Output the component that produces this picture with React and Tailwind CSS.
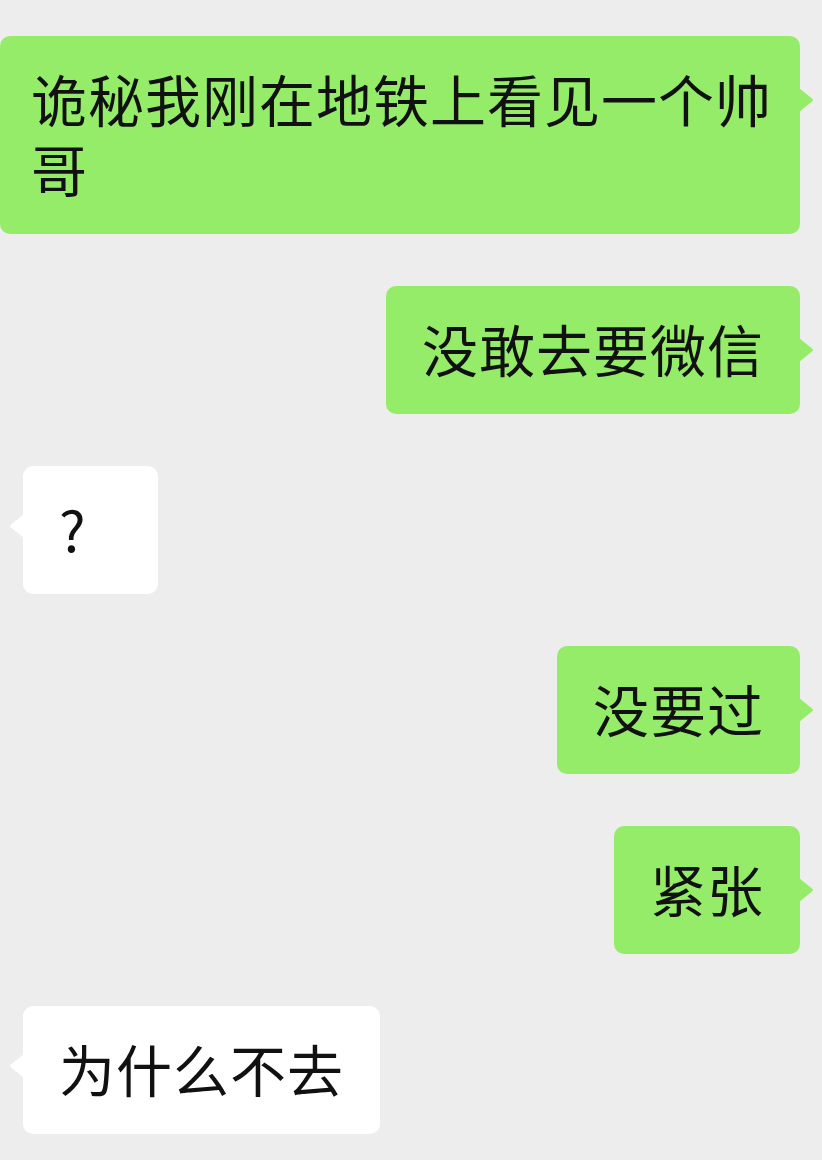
import React from "react";

const font = { fontFamily: '"Noto Sans CJK SC", "Noto Sans", sans-serif' };

function Right({ children, wide }) {
  return (
    <div className="flex justify-end pr-[22px]">
      <div
        className={
          "relative rounded-[10px] bg-[#95ec69] text-[56px] tracking-[1px] leading-[70px] text-[#111111] pt-[27px] pb-[31px] " +
          (wide ? "max-w-[800px] pl-[31px] pr-[20px]" : "px-[36px]")
        }
      >
        {children}
        <svg
          className="absolute right-[-15px] top-[48px]"
          width="16"
          height="32"
          viewBox="0 0 16 32"
        >
          <path d="M0 4 L13 14.5 Q15 16 13 17.5 L0 28 Z" fill="#95ec69" />
        </svg>
      </div>
    </div>
  );
}

function Left({ children, minW }) {
  return (
    <div className="flex justify-start pl-[23px]">
      <div
        className={
          "relative rounded-[10px] bg-white text-[56px] tracking-[1px] leading-[70px] text-[#111111] pt-[27px] pb-[31px] px-[36px] " +
          (minW ? "w-[135px]" : "")
        }
      >
        {children}
        <svg
          className="absolute left-[-15px] top-[44px]"
          width="16"
          height="32"
          viewBox="0 0 16 32"
        >
          <path d="M16 4 L3 14.5 Q1 16 3 17.5 L16 28 Z" fill="#ffffff" />
        </svg>
      </div>
    </div>
  );
}

export default function App() {
  return (
    <div
      className="w-[822px] min-h-[1160px] bg-[#ededed] overflow-hidden flex flex-col gap-[52px] pt-[36px]"
      style={font}
    >
      <Right wide>诡秘我刚在地铁上看见一个帅哥</Right>
      <Right>没敢去要微信</Right>
      <Left minW>?</Left>
      <Right>没要过</Right>
      <Right>紧张</Right>
      <Left>为什么不去</Left>
    </div>
  );
}
